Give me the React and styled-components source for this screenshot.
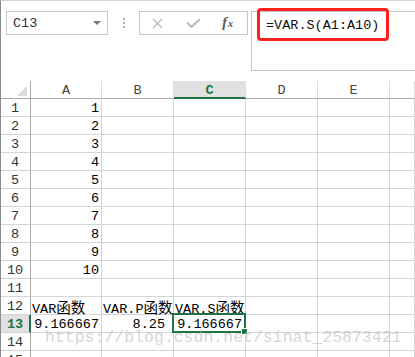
import React from 'react'
import styled, { createGlobalStyle } from 'styled-components'

const GREEN = '#217346'
const GRID = '#d4d4d4'
const MONO = '"Liberation Mono", "Noto Sans CJK SC", monospace'

const GlobalStyle = createGlobalStyle`
  html, body {
    margin: 0;
    padding: 0;
    background: #fff;
  }
  body {
    font-family: ${MONO};
  }
`

const Page = styled.div`
  position: relative;
  width: 415px;
  height: 357px;
  overflow: hidden;
  box-sizing: border-box;
  border-left: 1px solid #8c8c8c;
  border-top: 1px solid #d2d2d2;
  background: #fff;
`

const Toolbar = styled.div`
  display: flex;
  align-items: flex-start;
  height: 80px;
  padding: 10px 0 0 5px;
  box-sizing: border-box;
`

const NameBox = styled.div`
  width: 102px;
  height: 24px;
  box-sizing: border-box;
  border: 1px solid #c6c6c6;
  display: flex;
  align-items: center;
  justify-content: space-between;
  padding: 2px 6px 0 6px;
  font-size: 13.5px;
  line-height: 20px;
  color: #333;
`

const Caret = styled.span`
  width: 0;
  height: 0;
  border-left: 4px solid transparent;
  border-right: 4px solid transparent;
  border-top: 4px solid #777;
  margin-top: -2px;
`

const Dots = styled.div`
  width: 31px;
  display: flex;
  flex-direction: column;
  align-items: center;
  gap: 2px;
  padding-top: 7px;
`

const Dot = styled.span`
  width: 2px;
  height: 2px;
  background: #b0b0b0;
`

const FxBox = styled.div`
  width: 109px;
  height: 24px;
  box-sizing: border-box;
  border: 1px solid #c6c6c6;
  display: flex;
  align-items: center;
`

const Slot = styled.div`
  flex: 1;
  display: flex;
  align-items: center;
  justify-content: center;
`

const FxLabel = styled.span`
  font-family: "Liberation Serif", serif;
  font-style: italic;
  font-weight: bold;
  color: #555;
  font-size: 14px;
  line-height: 14px;
  margin-left: -3px;

  small {
    font-size: 10px;
    margin-left: 1px;
  }
`

const FormulaBox = styled.div`
  position: relative;
  flex: 1;
  height: 60px;
  margin-left: 3px;
  box-sizing: border-box;
  border: 1px solid #c6c6c6;
  border-right: none;
  padding: 4px 14px;
  font-size: 13.5px;
  line-height: 20px;
  color: #111;
`

const Highlight = styled.div`
  position: absolute;
  left: 5px;
  top: -4px;
  width: 132px;
  height: 33px;
  box-sizing: border-box;
  border: 3px solid #ff1f1f;
  border-radius: 4px;
`

const Sheet = styled.div`
  display: grid;
  grid-template-columns: 30px 71px 72px 72px 72px 72px 1fr;
  grid-auto-rows: 18px;
  font-size: 13.5px;
  line-height: 20px;
`

const Corner = styled.div`
  position: relative;
  box-sizing: border-box;
  border-right: 1px solid #ababab;
  border-bottom: 1px solid #ababab;

  &::after {
    content: '';
    position: absolute;
    right: 3px;
    bottom: 2px;
    width: 0;
    height: 0;
    border-left: 10px solid transparent;
    border-bottom: 10px solid #dcdcdc;
  }
`

const ColHead = styled.div`
  box-sizing: border-box;
  text-align: center;
  border-right: 1px solid #dcdcdc;
  border-bottom: ${(p) => (p.$active ? `2px solid ${GREEN}` : '1px solid #ababab')};
  background: ${(p) => (p.$active ? '#e1e1e1' : '#fff')};
  color: ${(p) => (p.$active ? GREEN : '#444')};
  font-weight: ${(p) => (p.$active ? 'bold' : 'normal')};
`

const RowHead = styled.div`
  box-sizing: border-box;
  text-align: center;
  border-bottom: 1px solid ${GRID};
  border-right: ${(p) => (p.$active ? `2px solid ${GREEN}` : '1px solid #ababab')};
  background: ${(p) => (p.$active ? '#e1e1e1' : '#fff')};
  color: ${(p) => (p.$active ? GREEN : '#333')};
  font-weight: ${(p) => (p.$active ? 'bold' : 'normal')};
  padding-right: ${(p) => (p.$active ? '0' : '1px')};
`

const Cell = styled.div`
  position: relative;
  box-sizing: border-box;
  border-right: 1px solid ${GRID};
  border-bottom: 1px solid ${GRID};
  text-align: ${(p) => p.$align || 'left'};
  padding: 0 ${(p) => p.$pr || 2}px 0 1px;
  white-space: nowrap;
  color: #000;
  z-index: ${(p) => (p.$selected ? 2 : 1)};

  ${(p) => p.$selected && `
    &::before {
      content: '';
      position: absolute;
      left: -2px;
      top: -2px;
      right: -1px;
      bottom: -1px;
      border: 2px solid ${GREEN};
      pointer-events: none;
    }
  `}
`

const FillHandle = styled.span`
  position: absolute;
  right: -3px;
  bottom: -3px;
  width: 5px;
  height: 5px;
  background: ${GREEN};
  border: 1px solid #fff;
`

const Cjk = styled.span`
  font-family: "Noto Sans CJK SC", sans-serif;
  font-size: 14.5px;
`

const Watermark = styled.div`
  position: absolute;
  left: 44px;
  top: 329px;
  font-family: ${MONO};
  font-size: 16.5px;
  line-height: 16.5px;
  color: rgba(185, 185, 185, 0.6);
  white-space: nowrap;
  z-index: 5;
  pointer-events: none;
`

const columns = ['A', 'B', 'C', 'D', 'E', '']

const data = {
  12: {
    A: { text: 'VAR', cjk: '函数' },
    B: { text: 'VAR.P', cjk: '函数' },
    C: { text: 'VAR.S', cjk: '函数' },
  },
  13: {
    A: { text: '9.166667', align: 'right' },
    B: { text: '8.25', align: 'right', pr: 8 },
    C: { text: '9.166667', align: 'right', pr: 3, selected: true },
  },
}
for (let i = 1; i <= 10; i++) data[i] = { A: { text: String(i), align: 'right' } }

const CrossIcon = () => (
  <svg width="11" height="11" viewBox="0 0 11 11">
    <path d="M1 1 L10 10 M10 1 L1 10" stroke="#b9b9b9" strokeWidth="1.3" fill="none" />
  </svg>
)

const CheckIcon = () => (
  <svg width="15" height="10" viewBox="0 0 15 10">
    <path d="M1 4.5 L5.5 9 L14 1" stroke="#b9b9b9" strokeWidth="2" fill="none" />
  </svg>
)

export default function App() {
  const rows = Array.from({ length: 15 }, (_, i) => i + 1)

  return (
    <Page>
      <GlobalStyle />
      <Toolbar>
        <NameBox>
          C13
          <Caret />
        </NameBox>
        <Dots>
          <Dot />
          <Dot />
          <Dot />
        </Dots>
        <FxBox>
          <Slot><CrossIcon /></Slot>
          <Slot><CheckIcon /></Slot>
          <Slot>
            <FxLabel>f<small>x</small></FxLabel>
          </Slot>
        </FxBox>
        <FormulaBox>
          =VAR.S(A1:A10)
          <Highlight />
        </FormulaBox>
      </Toolbar>

      <Sheet>
        <Corner />
        {columns.map((c, i) => (
          <ColHead key={i} $active={c === 'C'}>{c}</ColHead>
        ))}
        {rows.map((r) => (
          <React.Fragment key={r}>
            <RowHead $active={r === 13}>{r}</RowHead>
            {columns.map((c, i) => {
              const cell = (data[r] || {})[c]
              if (!cell) return <Cell key={i} />
              return (
                <Cell key={i} $align={cell.align} $pr={cell.pr} $selected={cell.selected}>
                  {cell.text}
                  {cell.cjk && <Cjk>{cell.cjk}</Cjk>}
                  {cell.selected && <FillHandle />}
                </Cell>
              )
            })}
          </React.Fragment>
        ))}
      </Sheet>

      <Watermark>https://blog.csdn.net/sinat_25873421</Watermark>
    </Page>
  )
}
